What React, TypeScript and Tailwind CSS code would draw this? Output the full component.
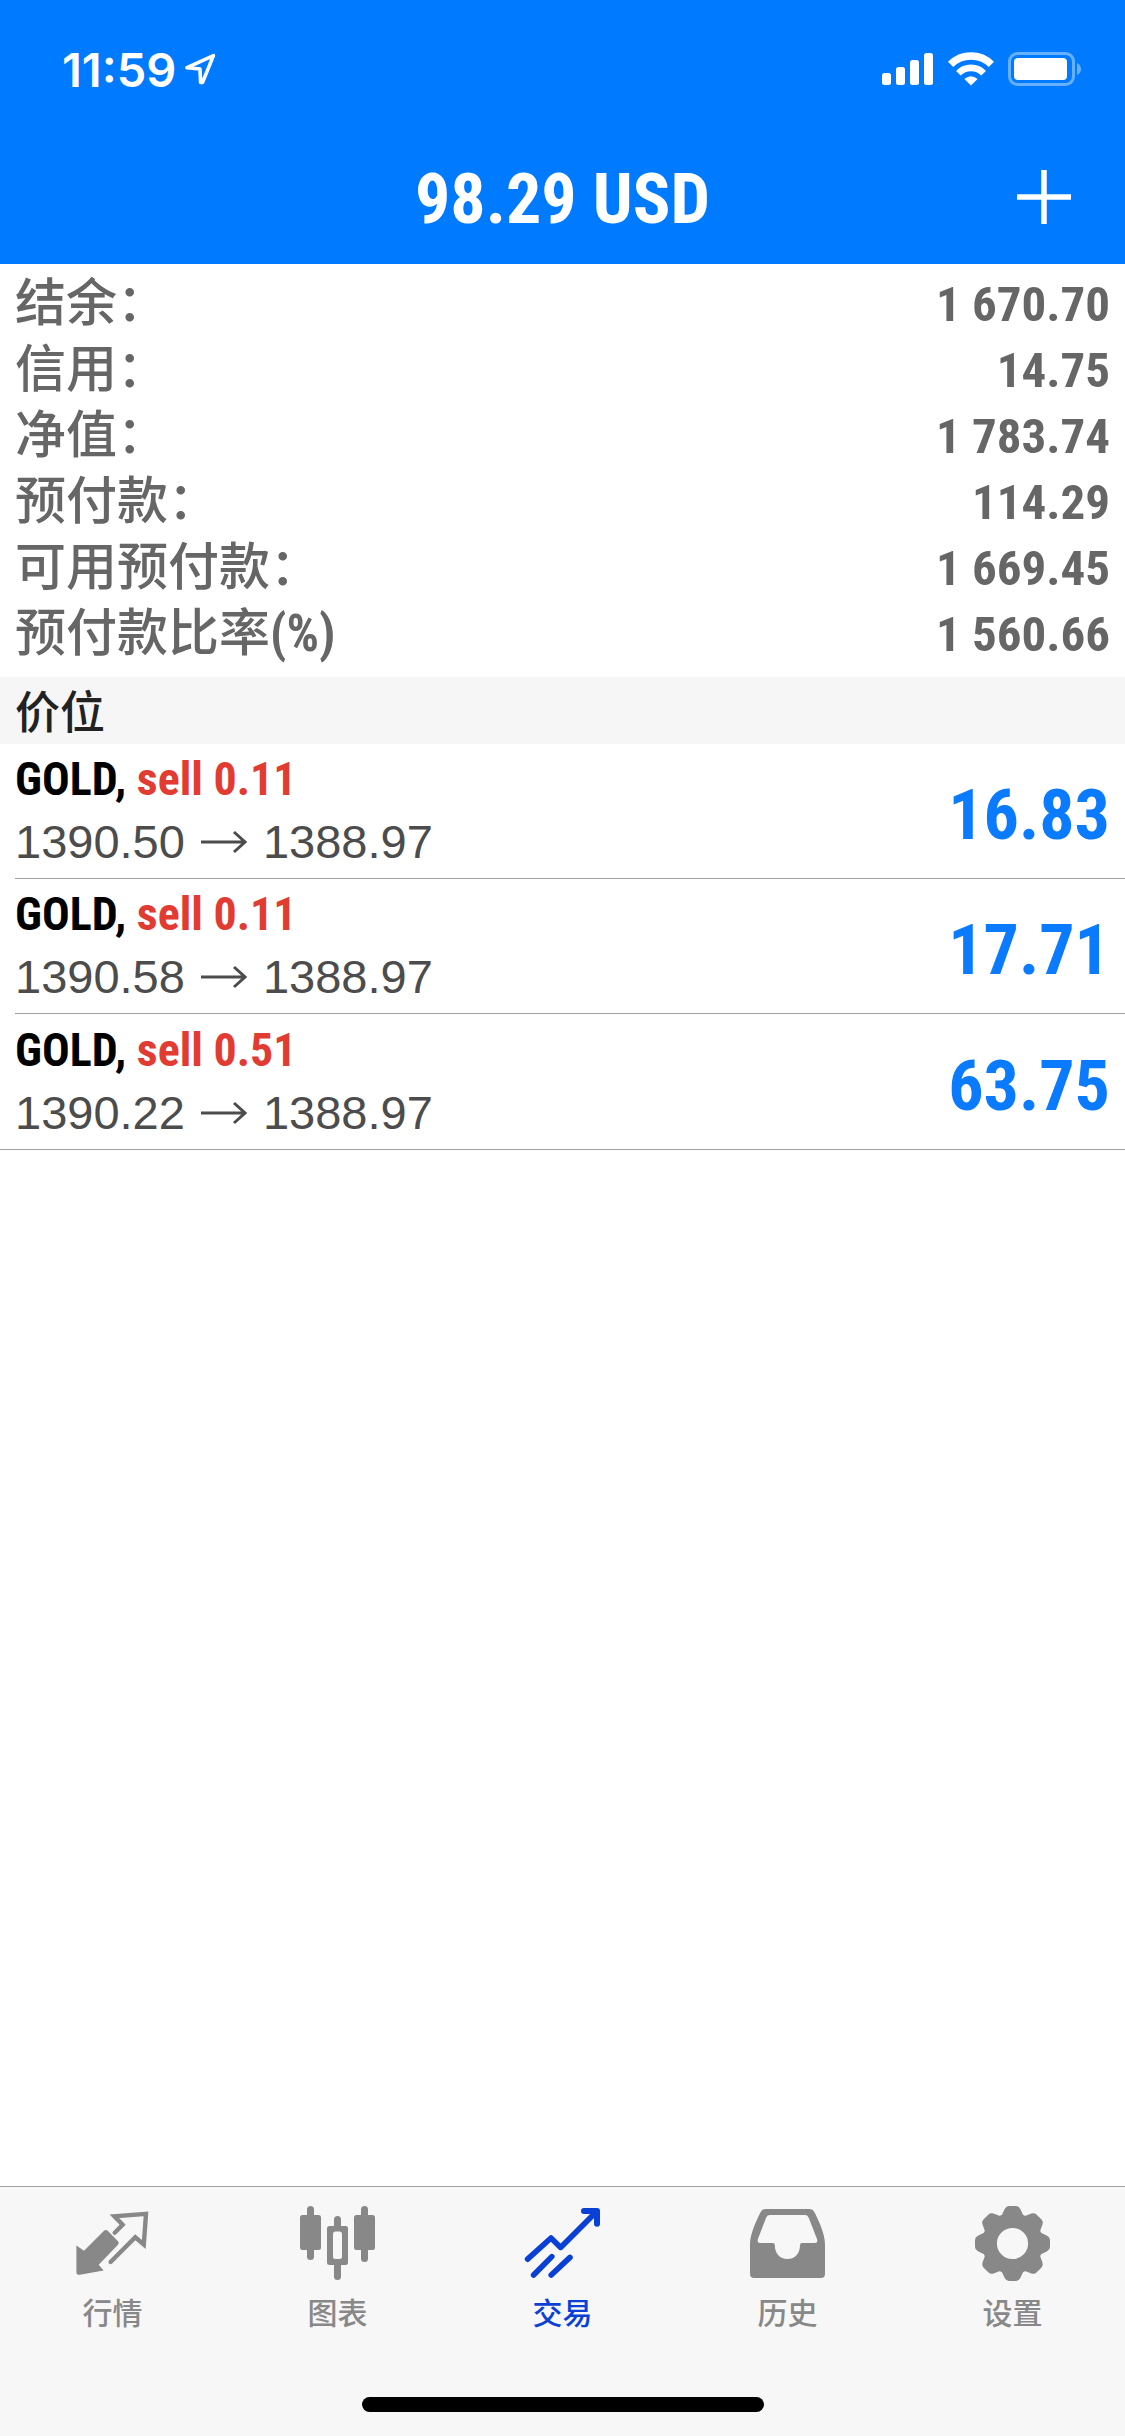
import React from "react";

const CJK = "font-['Noto_Sans_CJK_SC',sans-serif]";
const CONDENSED = "font-['Roboto_Condensed','Liberation_Sans',sans-serif]";

const account = [
  { label: "结余：", value: "1 670.70" },
  { label: "信用：", value: "14.75" },
  { label: "净值：", value: "1 783.74" },
  { label: "预付款：", value: "114.29" },
  { label: "可用预付款：", value: "1 669.45" },
  { label: "预付款比率", unit: "(%)", value: "1 560.66" },
];

const positions = [
  { symbol: "GOLD", side: "sell 0.11", open: "1390.50", current: "1388.97", profit: "16.83" },
  { symbol: "GOLD", side: "sell 0.11", open: "1390.58", current: "1388.97", profit: "17.71" },
  { symbol: "GOLD", side: "sell 0.51", open: "1390.22", current: "1388.97", profit: "63.75" },
];

const QuotesIcon = () => (
  <svg viewBox="0 0 80 80" className="size-20" fill="none" aria-hidden="true">
    <path
      d="M3.4 42.6 11 47.7 31 27.8Q33 26 35 28L45 38.2Q46.6 40 45 41.8L25.7 61.7 30.6 67.4 7 71.8Q3.4 72.2 3.4 69Z"
      fill="currentColor"
    />
    <path d="M41.7 29.7 49.6 21.7 41.4 13.4 73 10.8 70.8 41.4 62.3 34.2 37.6 59" stroke="currentColor" strokeWidth="4.4" strokeLinecap="round" />
  </svg>
);

const ChartIcon = () => (
  <svg viewBox="0 0 80 80" className="size-20" fill="currentColor" aria-hidden="true">
    <rect x="9" y="3" width="7" height="54" rx="3.5" />
    <rect x="2" y="12" width="21" height="35" rx="2.5" />
    <rect x="36" y="13" width="7" height="64" rx="3.5" />
    <rect x="29" y="23" width="21" height="39" rx="2.5" />
    <rect x="35" y="28.5" width="9" height="27.5" rx="2.5" fill="#f7f7f7" />
    <rect x="63" y="3" width="7" height="56" rx="3.5" />
    <rect x="56" y="12" width="21" height="35" rx="2.5" />
  </svg>
);

const TradeIcon = () => (
  <svg viewBox="0 0 80 80" className="size-20" fill="none" stroke="currentColor" strokeWidth="5.6" strokeLinecap="round" strokeLinejoin="round" aria-hidden="true">
    <path d="M4.6 56.2 28 35 37.6 44.4 73.6 8.4" />
    <path d="M61 8H74V20.8" strokeWidth="6" />
    <path d="M10.6 72 28.8 53.6M28.2 72 47 54.4" />
  </svg>
);

const HistoryIcon = () => (
  <svg viewBox="0 0 80 80" className="size-20" fill="currentColor" aria-hidden="true">
    <path
      fillRule="evenodd"
      d="M18 6H61Q65 6 66.6 9.4C72 20 77 32 77 41V71Q77 75 73 75H6Q2 75 2 71V41C2 32 7 20 12.4 9.4Q14 6 18 6ZM22 12Q19.4 12 18.2 14.4L9.9 36Q8.8 40 12 40H25Q26.8 40 26.8 42C26.8 50 31.5 56 39.5 56S52 50 52 42Q52 40 54 40H67Q70.2 40 69 36L60.6 14.4Q59.4 12 57 12Z"
    />
  </svg>
);

const GearIcon = () => (
  <svg viewBox="0 0 80 80" className="size-20" fill="currentColor" aria-hidden="true">
    <g transform="translate(39.5 40.5)">
      <circle r="23" fill="none" stroke="currentColor" strokeWidth="14.8" />
      {[0, 45, 90, 135, 180, 225, 270, 315].map((angle) => (
        <path
          key={angle}
          transform={`rotate(${angle})`}
          d="M-11.5-27-10.4-29-7.8-34.6Q-6.4-37.5-3.6-37.5H3.6Q6.4-37.5 7.8-34.6L10.4-29 11.5-27Z"
        />
      ))}
    </g>
  </svg>
);

const tabs = [
  { name: "行情", Icon: QuotesIcon },
  { name: "图表", Icon: ChartIcon },
  { name: "交易", Icon: TradeIcon, active: true },
  { name: "历史", Icon: HistoryIcon },
  { name: "设置", Icon: GearIcon },
];

const StatusBar = () => (
  <div className="flex h-[138px] items-center justify-between pl-[62px] pr-[43px]">
    <div className="flex items-center gap-2">
      <span className="font-['Inter',sans-serif] text-[47px] font-semibold leading-none">11:59</span>
      <svg viewBox="0 0 32 32" className="size-8" fill="none" stroke="currentColor" strokeWidth="3.6" strokeLinejoin="round" aria-hidden="true">
        <path d="M3 14.6 29.4 2.6 18.6 29.4H16.6L16 16Z" />
      </svg>
    </div>
    <div className="flex items-center gap-[14px]">
      <svg viewBox="0 0 52 34" className="h-[34px] w-[52px]" fill="currentColor" aria-hidden="true">
        <rect x="0" y="21" width="9" height="12" rx="2.5" />
        <rect x="14" y="15" width="9" height="18" rx="2.5" />
        <rect x="28" y="8" width="9" height="25" rx="2.5" />
        <rect x="42" y="1" width="9" height="32" rx="2.5" />
      </svg>
      <svg viewBox="0 0 46 34" className="h-[34px] w-[46px]" fill="none" stroke="currentColor" aria-hidden="true">
        <path d="M2.6 12.4A29 29 0 0 1 43.4 12.4" strokeWidth="7.4" />
        <path d="M10.4 21.2A17.6 17.6 0 0 1 35.6 21.2" strokeWidth="6.6" />
        <path d="M16.4 27Q23 21.4 29.6 27L23 33.6Z" fill="currentColor" stroke="none" />
      </svg>
      <svg viewBox="0 0 74 34" className="h-[34px] w-[74px]" fill="currentColor" aria-hidden="true">
        <rect x="1.5" y="1.5" width="64" height="31" rx="8" fill="none" stroke="#66b0ff" strokeWidth="3" />
        <path d="M69 11Q73 13 73 17T69 23Z" fill="#66b0ff" />
        <rect x="6" y="6" width="53" height="22" rx="4" />
      </svg>
    </div>
  </div>
);

export default function App() {
  return (
    <div className={`flex min-h-screen w-full flex-col bg-white ${CJK}`}>
      <header className="bg-[#007aff] text-white">
        <StatusBar />
        <div className="grid h-[126px] grid-cols-[1fr_auto_1fr] items-center px-[51px] pb-1">
          <h1 className={`col-start-2 text-[70px] font-bold leading-none ${CONDENSED}`}>98.29 USD</h1>
          <button type="button" aria-label="新订单" className="justify-self-end pb-1">
            <svg viewBox="0 0 60 60" className="size-[60px]" stroke="currentColor" strokeWidth="5.5" aria-hidden="true">
              <path d="M30 3V57M3 30H57" />
            </svg>
          </button>
        </div>
      </header>

      <main className="flex-1">
        <dl className="px-[15px] pb-3 pt-[5px] text-[#666]">
          {account.map((row) => (
            <div key={row.label} className="flex h-[66px] items-baseline justify-between">
              <dt className="text-[51px] font-medium leading-[60px]">
                {row.label}
                {row.unit && <span className={`font-bold ${CONDENSED}`}>{row.unit}</span>}
              </dt>
              <dd className={`text-[49px] font-bold leading-[60px] ${CONDENSED}`}>{row.value}</dd>
            </div>
          ))}
        </dl>

        <h2 className="bg-[#f6f6f6] px-[15px] pb-[2px] text-[45px] font-medium leading-[65px] text-[#222]">价位</h2>

        <ul className="border-b border-[#a0a0a4]">
          {positions.map((p) => (
            <li key={p.open} className="ml-[15px] flex h-[135px] items-center justify-between border-b border-[#a0a0a4] pr-[15px] last:border-b-0">
              <div>
                <p className={`text-[46px] font-bold leading-[62px] text-black ${CONDENSED}`}>
                  {p.symbol}, <span className="text-[#e23c32]">{p.side}</span>
                </p>
                <p className="flex items-center gap-4 font-['Liberation_Sans',sans-serif] text-[47px] leading-[64px] text-[#4c4c4c]">
                  {p.open}
                  <svg viewBox="0 0 46 24" className="h-6 w-[46px]" fill="none" stroke="currentColor" strokeWidth="3" aria-hidden="true">
                    <path d="M0 12H44M33 2 44 12 33 22" />
                  </svg>
                  {p.current}
                </p>
              </div>
              <span className={`pt-2 text-[70px] font-bold leading-none text-[#0a7aff] ${CONDENSED}`}>{p.profit}</span>
            </li>
          ))}
        </ul>
      </main>

      <footer className="border-t border-[#a0a0a4] bg-[#f7f7f7]">
        <nav className="grid grid-cols-5 pt-4">
          {tabs.map(({ name, Icon, active }) => (
            <button
              key={name}
              type="button"
              aria-current={active ? "page" : undefined}
              className={`flex flex-col items-center gap-1.5 ${active ? "text-[#0a40d6]" : "text-[#888]"}`}
            >
              <Icon />
              <span className="text-[30px] font-medium leading-[44px]">{name}</span>
            </button>
          ))}
        </nav>
        <div className="mx-auto mb-6 mt-16 h-[15px] w-[402px] rounded-full bg-black" />
      </footer>
    </div>
  );
}
